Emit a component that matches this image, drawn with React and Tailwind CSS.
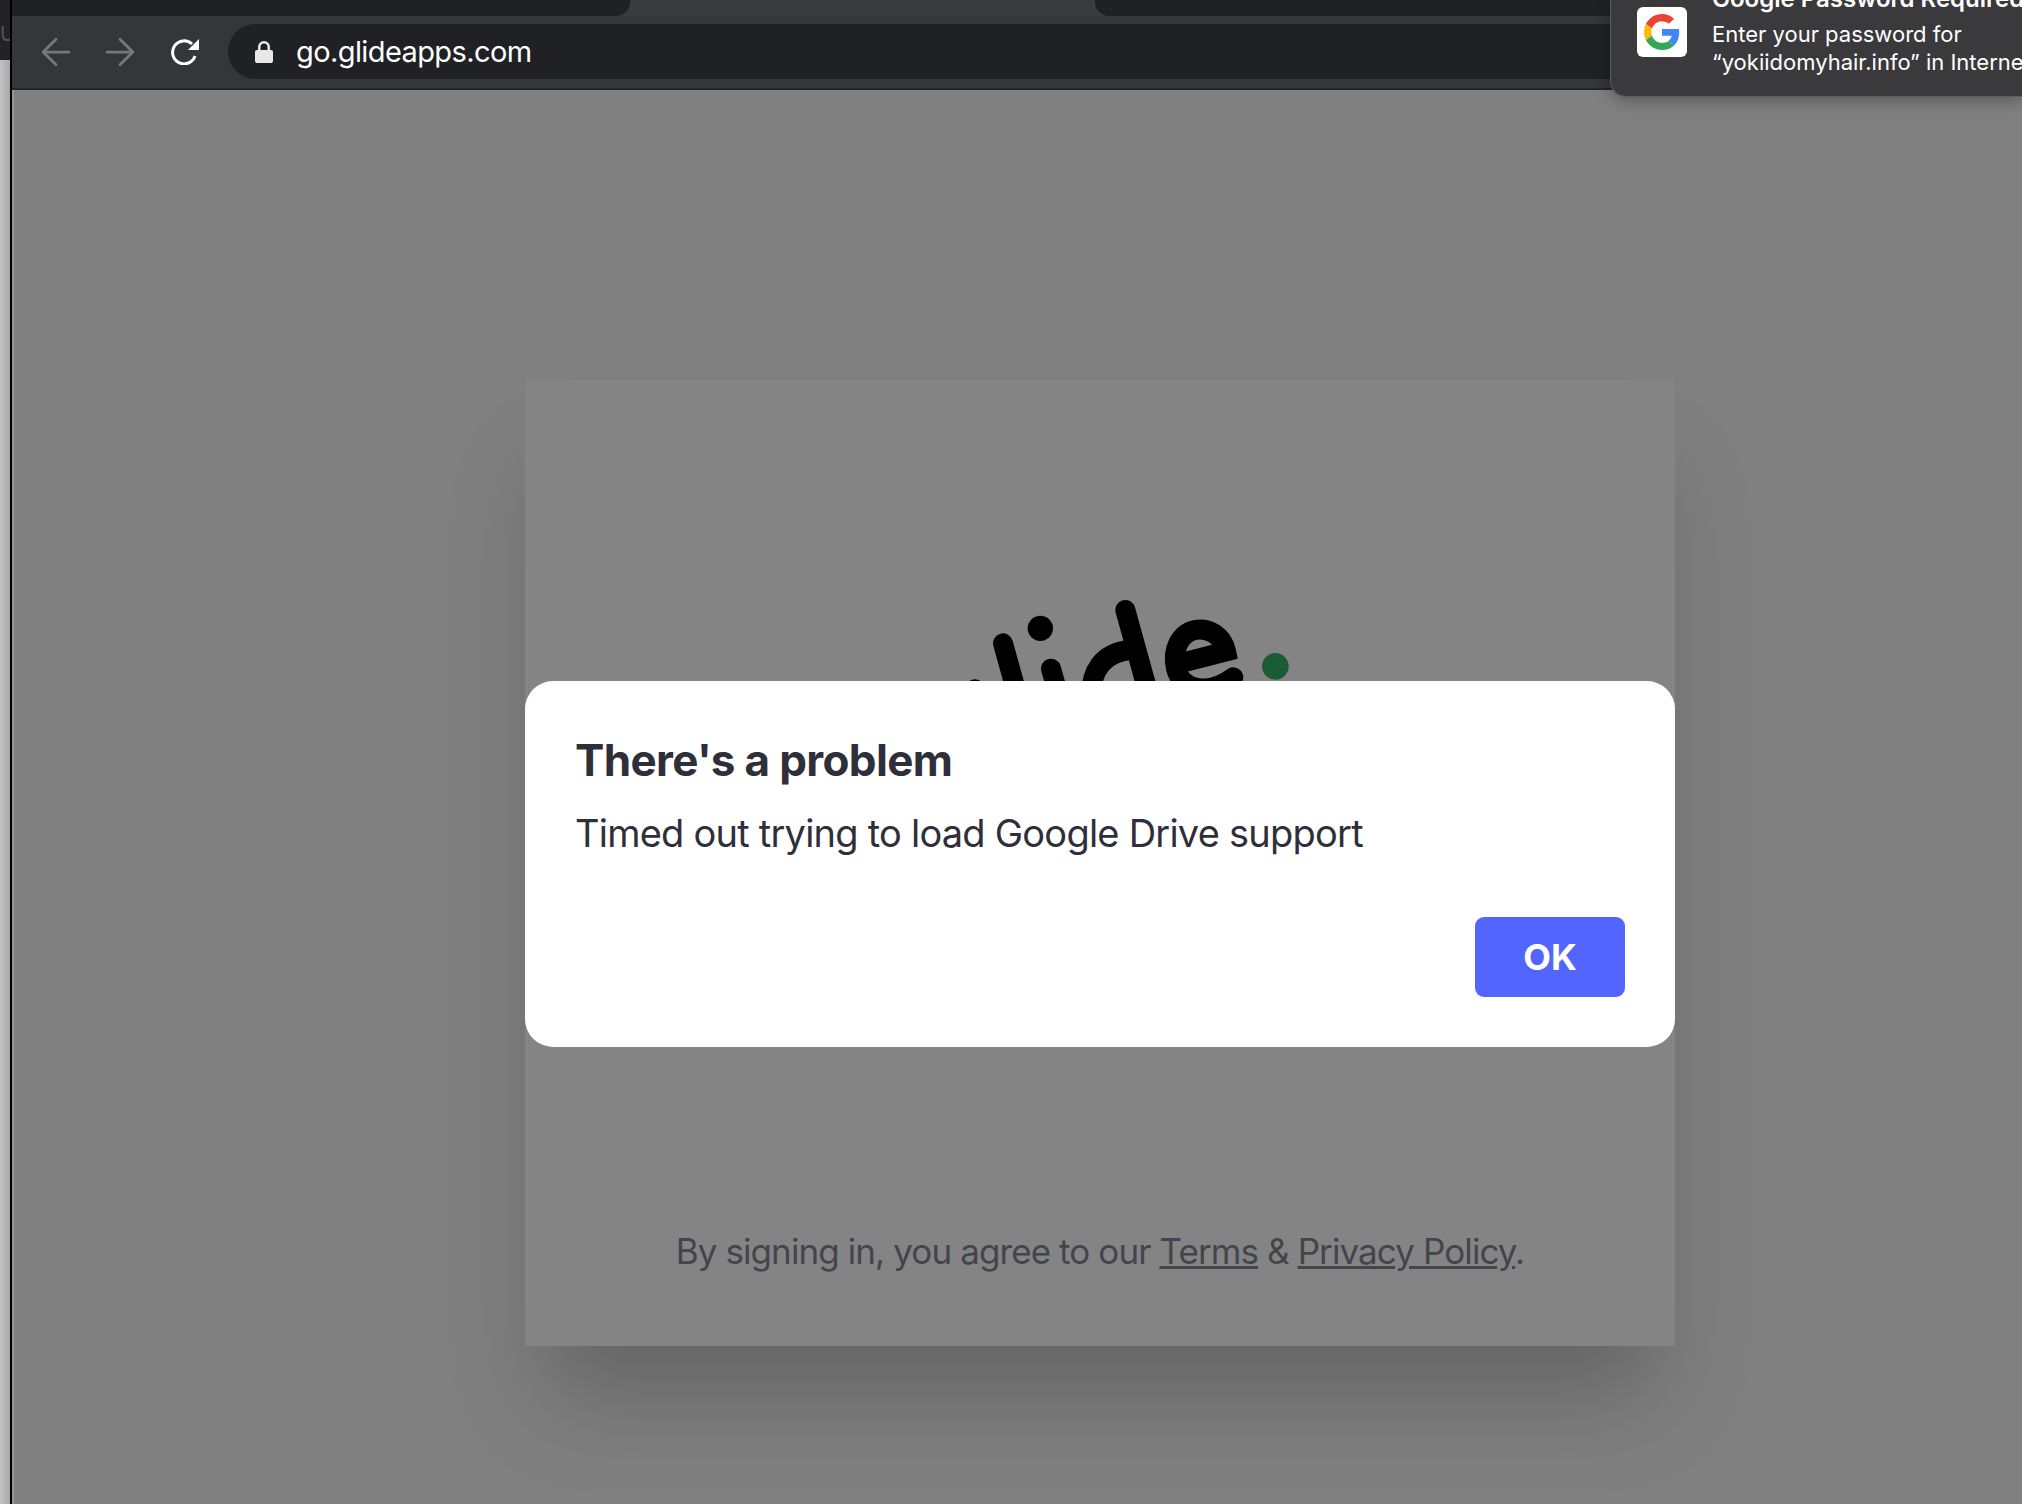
import React from 'react';
import { ArrowLeft, ArrowRight } from 'lucide-react';

function GoogleIcon() {
  return (
    <svg viewBox="0 0 48 48" className="w-[36px] h-[36px]">
      <path fill="#EA4335" d="M24 9.5c3.54 0 6.71 1.22 9.21 3.6l6.85-6.85C35.9 2.38 30.47 0 24 0 14.62 0 6.51 5.38 2.56 13.22l7.98 6.19C12.43 13.72 17.74 9.5 24 9.5z" />
      <path fill="#4285F4" d="M46.98 24.55c0-1.57-.15-3.09-.38-4.55H24v9.02h12.94c-.58 2.96-2.26 5.48-4.78 7.18l7.73 6c4.51-4.18 7.09-10.36 7.09-17.65z" />
      <path fill="#FBBC05" d="M10.53 28.59c-.48-1.45-.76-2.99-.76-4.59s.27-3.14.76-4.59l-7.98-6.19C.92 16.46 0 20.12 0 24c0 3.88.92 7.54 2.56 10.78l7.97-6.19z" />
      <path fill="#34A853" d="M24 48c6.48 0 11.93-2.13 15.89-5.81l-7.73-6c-2.15 1.45-4.92 2.3-8.16 2.3-6.26 0-11.57-4.22-13.47-9.91l-7.98 6.19C6.51 42.62 14.62 48 24 48z" />
    </svg>
  );
}

// only the top of the logo shows above the dialog
function GlideLogo() {
  return (
    <svg viewBox="0 0 1350 420" className="w-[450px] h-[140px] ml-[375px] mt-[190px] shrink-0">
      <g fill="none" stroke="#000" strokeWidth="60" strokeLinecap="round">
        <path d="M225 358 L226 400" />
        <path d="M309 220 L370 440" />
        <path d="M453 296 L500 460" />
        <path d="M676 120 L770 460" />
        <path d="M574 400 C566 300 610 248 690 240" />
        <path d="M862 274 L978 244 C968 196 925 172 885 180 C840 190 815 240 828 295 C845 365 930 375 1000 322" />
      </g>
      <circle cx="421" cy="175" r="38" fill="#000" />
      <circle cx="1126" cy="289" r="40" fill="#1a5c36" />
    </svg>
  );
}

export default function App() {
  return (
    <div className="relative flex w-[2022px] h-[1504px] overflow-hidden bg-[#808080] font-['Inter',sans-serif]">
      {/* Window behind */}
      <div className="flex flex-col w-[12px] shrink-0 border-r-2 border-black">
        <div className="h-[60px] bg-[#232323] overflow-hidden">
          <span className="block mt-[24px] text-[20px] leading-none text-[#555]">U</span>
        </div>
        <div className="flex-1 bg-gradient-to-r from-[#c4c4c4] to-[#a8a8a8]" />
      </div>

      <div className="flex flex-col flex-1 min-w-0">
        {/* Tab strip */}
        <div className="flex h-[16px] bg-[#3a3b3f]">
          <div className="w-[618px] bg-[#202124] rounded-br-[14px]" />
          <div className="ml-[465px] flex-1 bg-[#202124] rounded-bl-[14px]" />
        </div>

        {/* Toolbar */}
        <div className="flex h-[74px] pt-[8px] pb-[9px] bg-[#35363a] border-b-2 border-[#232427]">
          <div className="flex items-center w-[216px] pl-[22px] gap-[20px]">
            <ArrowLeft className="w-[44px] h-[44px] text-[#77787b]" strokeWidth={1.5} />
            <ArrowRight className="w-[44px] h-[44px] text-[#77787b]" strokeWidth={1.5} />
            <svg viewBox="0 0 28 26" className="w-[28px] h-[26px] ml-[9px]">
              <path d="M21 5 A11.5 11.5 0 1 0 24 17" fill="none" stroke="#fff" strokeWidth="3" />
              <path d="M28 0 L28 11 L17 11 Z" fill="#fff" />
            </svg>
          </div>
          <div className="flex items-center flex-1 pl-[27px] gap-[23px] bg-[#202124] rounded-l-[28px]">
            <svg viewBox="0 0 18 22" className="w-[18px] h-[22px]">
              <path fill="#e8e8e8" d="M3 9V6a6 6 0 0 1 12 0v3h1a2 2 0 0 1 2 2v9a2 2 0 0 1-2 2H2a2 2 0 0 1-2-2v-9a2 2 0 0 1 2-2zm2.5 0h7V6a3.5 3.5 0 0 0-7 0z" />
            </svg>
            <span className="text-[29px] leading-none tracking-[-0.6px] text-white">go.glideapps.com</span>
          </div>
        </div>

        {/* Sign in card */}
        <div className="flex-1 border-l-2 border-[#969696]">
          <div className="relative flex flex-col w-[1150px] h-[966px] mt-[290px] ml-[511px] bg-[#848484] shadow-[0_70px_90px_-20px_rgba(0,0,0,0.22)]">
            <GlideLogo />
            <p className="mt-[519px] text-center text-[35px] leading-[44px] tracking-[-0.9px] text-[#44444d]">
              By signing in, you agree to our <span className="underline">Terms</span> &amp; <span className="underline">Privacy Policy</span>.
            </p>

            {/* Error dialog */}
            <div className="absolute left-0 right-0 top-[301px] flex flex-col h-[366px] p-[50px] pt-[55px] bg-white rounded-[28px]">
              <h2 className="text-[44px] leading-[48px] tracking-[-0.65px] font-bold text-[#2f2f3a]">There's a problem</h2>
              <p className="mt-[25px] text-[38px] leading-[48px] tracking-[-0.77px] text-[#2f2f3a]">Timed out trying to load Google Drive support</p>
              <button className="self-end mt-auto w-[150px] h-[80px] rounded-[9px] bg-[#5266ff] text-[36px] font-bold text-white">OK</button>
            </div>
          </div>
        </div>
      </div>

      {/* Notification */}
      <div className="absolute top-0 left-[1610px] right-0 flex h-[97px] pl-[26px] gap-[25px] overflow-hidden bg-[#3a393b] border-l border-b border-[#5c5c5e] rounded-bl-[16px] shadow-[0_4px_16px_rgba(0,0,0,0.3)]">
        <div className="flex items-center justify-center w-[50px] h-[50px] mt-[7px] shrink-0 rounded-[6px] bg-white">
          <GoogleIcon />
        </div>
        <div className="-mt-[15px] whitespace-nowrap text-[22px] leading-[28px] text-white">
          <div className="text-[24px] font-semibold">Google Password Required</div>
          <div className="mt-[7px]">Enter your password for</div>
          <div>“yokiidomyhair.info” in Internet Accounts</div>
        </div>
      </div>
    </div>
  );
}
